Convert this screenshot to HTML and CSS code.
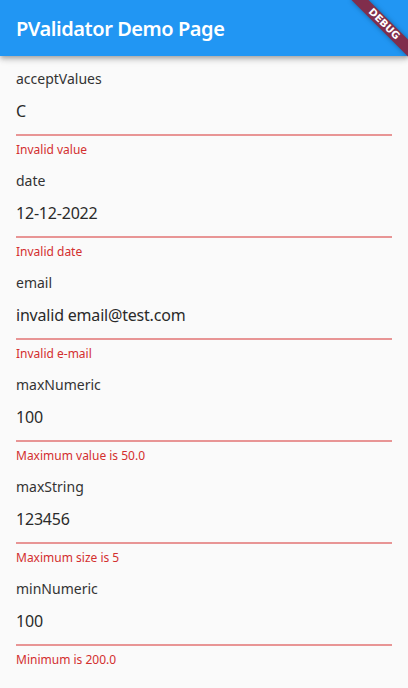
FILE: index.html
```html
<!DOCTYPE html>
<html>
<head>
<meta charset="utf-8">
<link rel="stylesheet" href="styles.css">
</head>
<body>
<div class="app">
  <header class="appbar"><h1 class="title">PValidator Demo Page</h1></header>
  <main class="form">
    <div class="field"><div class="label">acceptValues</div><div class="value">C</div><div class="error">Invalid value</div></div>
    <div class="field"><div class="label">date</div><div class="value">12-12-2022</div><div class="error">Invalid date</div></div>
    <div class="field"><div class="label">email</div><div class="value">invalid email@test.com</div><div class="error">Invalid e-mail</div></div>
    <div class="field"><div class="label">maxNumeric</div><div class="value">100</div><div class="error">Maximum value is 50.0</div></div>
    <div class="field"><div class="label">maxString</div><div class="value">123456</div><div class="error">Maximum size is 5</div></div>
    <div class="field"><div class="label">minNumeric</div><div class="value">100</div><div class="error">Minimum is 200.0</div></div>
  </main>
  <div class="banner">DEBUG</div>
</div>
</body>
</html>
```
FILE: styles.css
```css
html, body {
  margin: 0;
  padding: 0;
  width: 408px;
  height: 688px;
  overflow: hidden;
  background: #fafafa;
  font-family: "Noto Sans", "Open Sans", sans-serif;
}
.app {
  position: relative;
  width: 408px;
  height: 688px;
  overflow: hidden;
}
.appbar {
  position: relative;
  z-index: 2;
  height: 56px;
  background: #2196f3;
  display: flex;
  align-items: center;
  padding: 0 16px;
  box-shadow: 0 2px 4px -1px rgba(0,0,0,.2), 0 4px 5px 0 rgba(0,0,0,.14), 0 1px 10px 0 rgba(0,0,0,.12);
}
.title {
  margin: 0;
  color: #fff;
  font-size: 20px;
  font-weight: 600;
  line-height: 24px;
  letter-spacing: -0.45px;
  margin-top: 1px;
}
.form {
  padding: 0 16px;
  display: flex;
  flex-direction: column;
}
.field {
  height: 102px;
  box-sizing: border-box;
  padding-top: 13px;
}
.label {
  font-size: 14px;
  line-height: 20px;
  color: #333;
}
.value {
  margin-top: 10px;
  font-size: 16px;
  line-height: 24px;
  letter-spacing: -0.2px;
  color: #2a2a2a;
  padding-bottom: 11px;
  border-bottom: 2px solid #e89595;
}
.error {
  margin-top: 6px;
  font-size: 12px;
  line-height: 16px;
  color: #d32f2f;
}
.banner {
  position: absolute;
  z-index: 3;
  left: 344px;
  top: 18px;
  width: 80px;
  height: 12px;
  transform: rotate(45deg);
  background: rgb(128, 46, 76);
  color: #fff;
  font-family: "DejaVu Sans", sans-serif;
  font-weight: 900;
  font-size: 10px;
  line-height: 12px;
  text-align: center;
  box-shadow: 0 0 5px rgba(0,0,0,.35);
}
```
